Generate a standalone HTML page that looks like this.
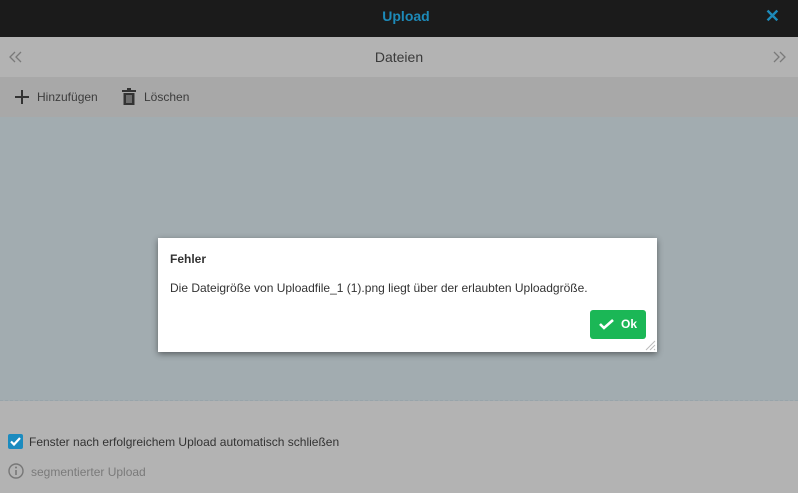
<!DOCTYPE html>
<html><head><meta charset="utf-8"><style>
*{margin:0;padding:0;box-sizing:border-box}
body{width:798px;height:493px;overflow:hidden;font-family:"Liberation Sans",sans-serif;background:#b3b3b3;position:relative}
.hd{position:absolute;left:0;top:0;width:798px;height:37px;background:#1b1b1b;color:#1d8ab9;font-weight:bold;font-size:14px;text-align:center;line-height:33px;padding-left:14px}
.x{position:absolute;right:18px;top:0;font-size:18px;line-height:33px}
.nav{position:absolute;top:37px;left:0;width:798px;height:40px;background:#b3b3b3;text-align:center;line-height:40px;font-size:14px;color:#3a3a3a}
.tb{position:absolute;top:77px;left:0;width:798px;height:40px;background:#a8a8a8;font-size:12px;color:#3c3c3c}
.area{position:absolute;top:117px;left:0;width:798px;height:284px;background:#a2acb0;border-bottom:1px dashed #98a4aa}
.dlg{position:absolute;left:158px;top:238px;width:499px;height:114px;background:#fff;box-shadow:0 2px 6px rgba(0,0,0,.45)}
.ok{position:absolute;left:432px;top:72px;width:56px;height:29px;background:#1bb756;border-radius:3px;color:#fff;font-weight:bold;font-size:12px;line-height:29px}
</style></head><body>
<div class="hd">Upload<span class="x">✕</span></div>
<div class="nav">Dateien
<svg style="position:absolute;left:9px;top:14px" width="14" height="12"><path d="M6 1L1 6l5 5M12 1L7 6l5 5" stroke="#7a7a7a" fill="none" stroke-width="1.3"/></svg>
<svg style="position:absolute;left:773px;top:14px" width="14" height="12"><path d="M1 1l5 5-5 5M7 1l5 5-5 5" stroke="#7a7a7a" fill="none" stroke-width="1.3"/></svg>
</div>
<div class="tb">
<svg style="position:absolute;left:15px;top:13px" width="14" height="14"><path d="M7 0v14M0 7h14" stroke="#333" stroke-width="2"/></svg>
<span style="position:absolute;left:37px;top:13px">Hinzufügen</span>
<svg style="position:absolute;left:122px;top:11px" width="14" height="17"><path d="M0 3h14M5 1h4" stroke="#333" stroke-width="2"/><path d="M1.5 5h11v12h-11z" fill="#333"/><path d="M5 7v8M7 7v8M9 7v8" stroke="#a8a8a8" stroke-width="1"/></svg>
<span style="position:absolute;left:144px;top:13px">Löschen</span>
</div>
<div class="area"></div>
<div class="dlg">
<div style="position:absolute;left:12px;top:14px;font-size:12px;font-weight:bold;color:#333">Fehler</div>
<div style="position:absolute;left:12px;top:43px;font-size:12px;color:#333">Die Dateigröße von Uploadfile_1 (1).png liegt über der erlaubten Uploadgröße.</div>
<div class="ok"><svg style="position:absolute;left:9px;top:9px" width="15" height="11"><path d="M1 5l4 4 9-8" stroke="#fff" stroke-width="2.6" fill="none"/></svg><span style="position:absolute;left:31px">Ok</span></div>
<svg style="position:absolute;right:1px;bottom:1px" width="12" height="12"><path d="M11 2L2 11M11 6L6 11M11 10l-1 1" stroke="#bbb"/></svg>
</div>
<div style="position:absolute;left:8px;top:434px;width:15px;height:15px;background:#1b8bbf;border-radius:2px"><svg width="15" height="15"><path d="M3 7.5l3 3 6-6.5" stroke="#fff" stroke-width="2.2" fill="none"/></svg></div>
<div style="position:absolute;left:29px;top:435px;font-size:12px;color:#333">Fenster nach erfolgreichem Upload automatisch schließen</div>
<svg style="position:absolute;left:8px;top:463px" width="16" height="16"><circle cx="8" cy="8" r="7" stroke="#777" stroke-width="1.4" fill="none"/><path d="M8 7v5" stroke="#777" stroke-width="1.6"/><circle cx="8" cy="4.5" r="1" fill="#777"/></svg>
<div style="position:absolute;left:31px;top:465px;font-size:12px;color:#7a7a7a">segmentierter Upload</div>
</body></html>
